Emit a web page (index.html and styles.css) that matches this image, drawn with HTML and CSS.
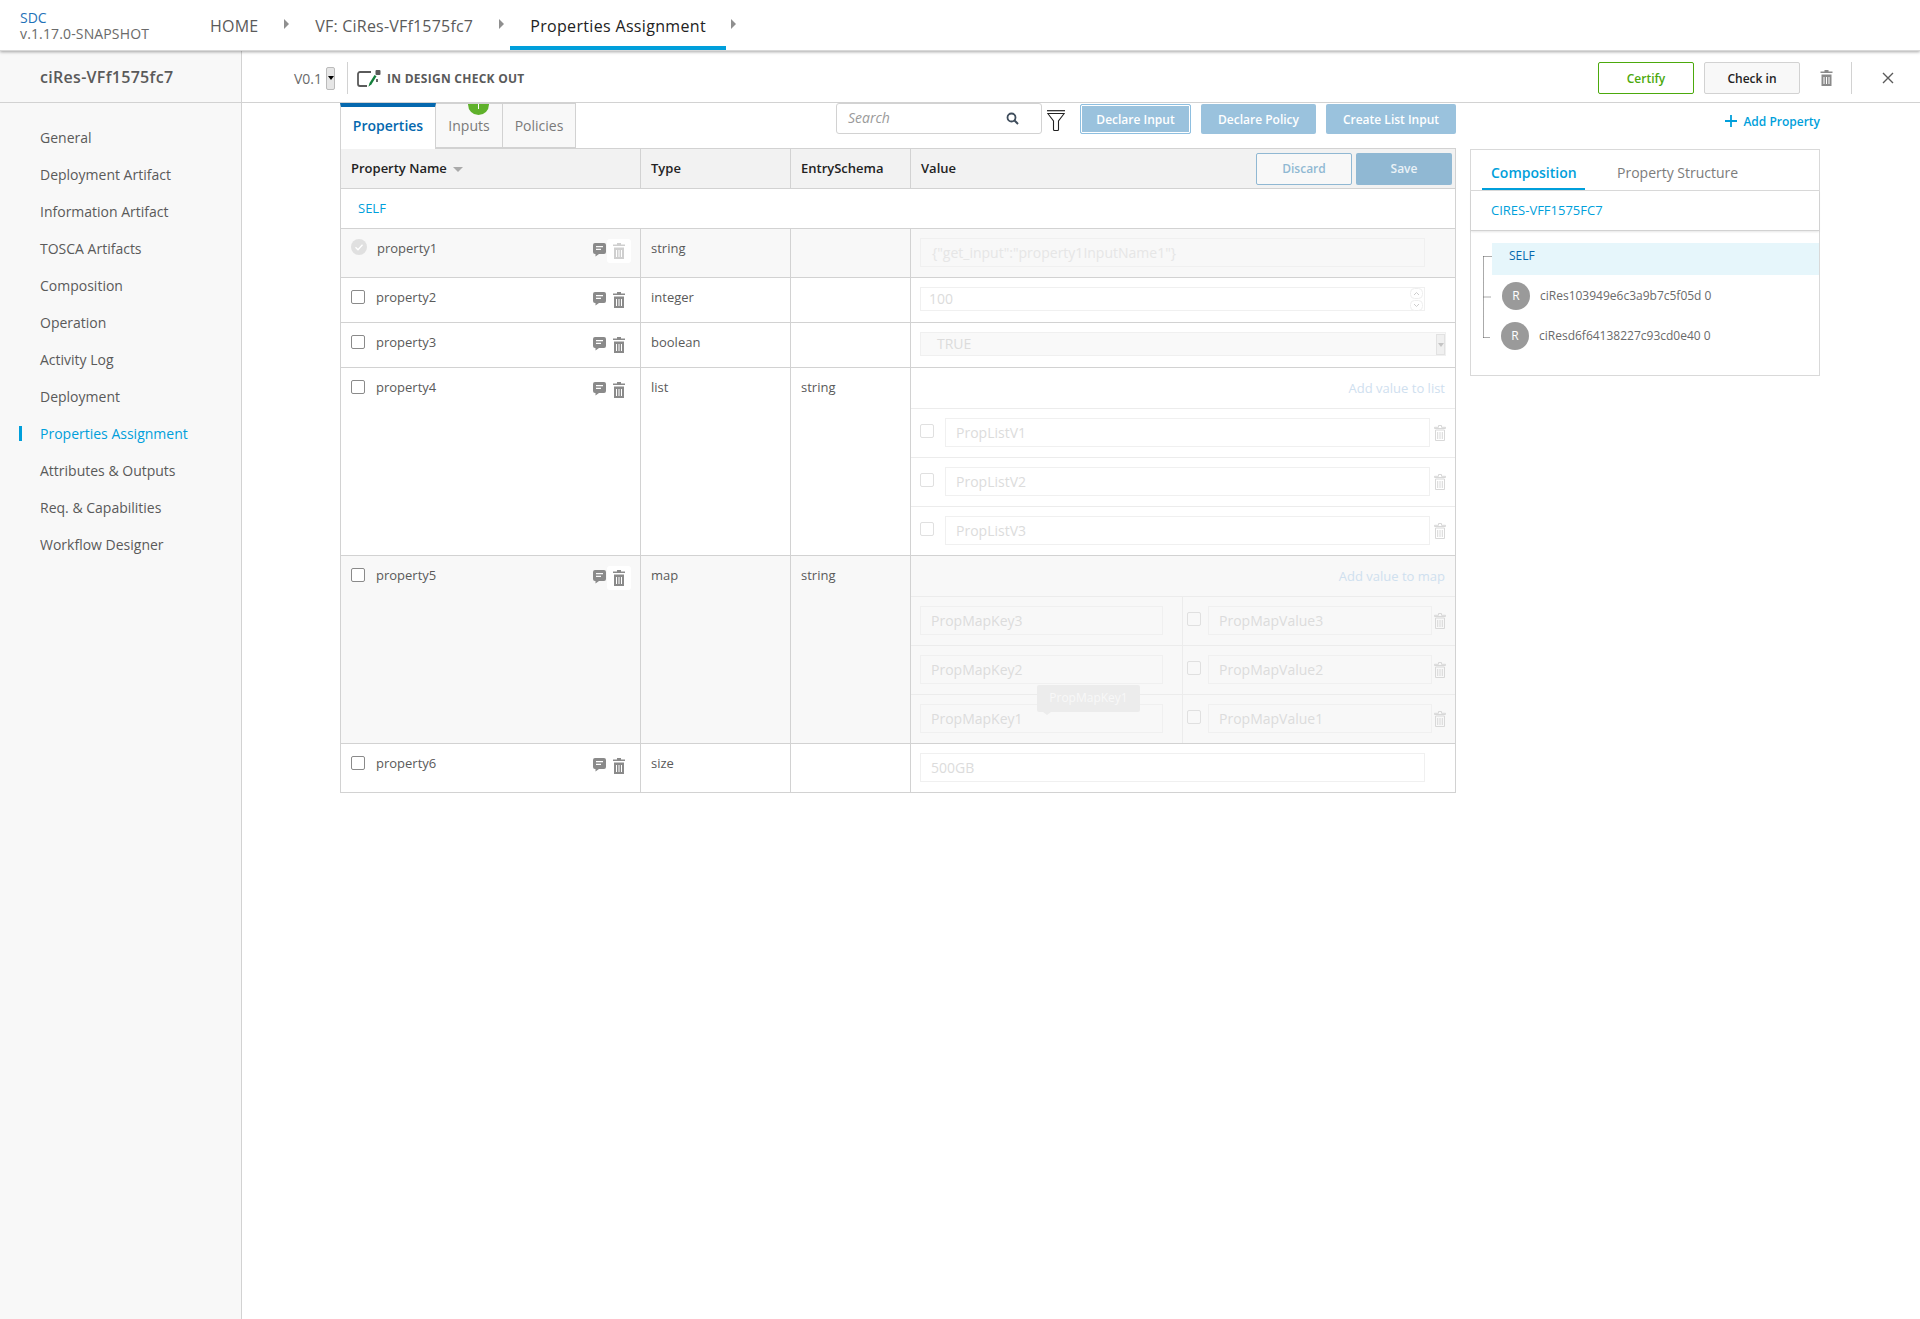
FILE: index.html
```html
<!DOCTYPE html>
<html lang="en">
<head>
<meta charset="utf-8">
<title>Properties Assignment</title>
<link rel="stylesheet" href="styles.css">
</head>
<body>
<svg class="sprite" xmlns="http://www.w3.org/2000/svg">
  <symbol id="trash" viewBox="0 0 12 16"><path d="M4 0h4v1.500h4V3H0V1.500h4zM1 4.500h10V16H1zM3 7v7h1V7zM5.500 7v7h1V7zM8 7v7h1V7z" fill-rule="evenodd"/></symbol>
  <symbol id="trash-line" viewBox="0 0 12 16"><path d="M4.500.5h3v1.800h4v1.200H.5V2.300h4zM1.500 5h9v10.500h-9zM3.700 7v7M6 7v7M8.300 7v7" fill="none" stroke="currentColor" stroke-width="1"/></symbol>
  <symbol id="comment" viewBox="0 0 13 14"><path d="M2 0h9a2 2 0 0 1 2 2v7a2 2 0 0 1-2 2H6l-3.500 2.500V11H2a2 2 0 0 1-2-2V2a2 2 0 0 1 2-2zM3 3v1.300h7V3zM3 5.800v1.200h5V5.800z" fill-rule="evenodd"/></symbol>
</svg>

<header class="app-header">
  <div class="logo"><div class="logo-name">SDC</div><div class="logo-version">v.1.17.0-SNAPSHOT</div></div>
  <nav class="crumbs">
    <a class="crumb">HOME</a><span class="crumb-arrow"></span>
    <a class="crumb">VF: CiRes-VFf1575fc7</a><span class="crumb-arrow"></span>
    <a class="crumb crumb-active">Properties Assignment</a><span class="crumb-arrow"></span>
  </nav>
</header>

<div class="app-body">
  <aside class="sidebar">
    <div class="side-title">ciRes-VFf1575fc7</div>
    <ul class="side-menu">
      <li>General</li>
      <li>Deployment Artifact</li>
      <li>Information Artifact</li>
      <li>TOSCA Artifacts</li>
      <li>Composition</li>
      <li>Operation</li>
      <li>Activity Log</li>
      <li>Deployment</li>
      <li class="side-active">Properties Assignment</li>
      <li>Attributes &amp; Outputs</li>
      <li>Req. &amp; Capabilities</li>
      <li>Workflow Designer</li>
    </ul>
  </aside>

  <main class="content">
    <div class="topbar">
      <span class="version">V0.1</span>
      <span class="version-select"></span>
      <span class="vsep"></span>
      <svg class="status-icon" viewBox="0 0 24 17" aria-hidden="true">
        <path d="M14 2H3a2 2 0 0 0-2 2v10a2 2 0 0 0 2 2h7M20 9v3" fill="none" stroke="#5a5a5a" stroke-width="1.800"/>
        <rect x="18.500" y="0" width="5" height="5" rx="1" fill="#5a5a5a"/>
        <path d="M11.500 16.800l1-3.800 5-8 2 1.200-5 8z" fill="#14803c"/>
      </svg>
      <span class="status-text">IN DESIGN CHECK OUT</span>
      <div class="top-actions">
        <button class="btn-certify">Certify</button>
        <button class="btn-checkin">Check in</button>
        <svg class="top-trash"><use href="#trash"/></svg>
        <span class="vsep vsep-right"></span>
        <svg class="top-close" viewBox="0 0 12 12" aria-hidden="true"><path d="M1 1l10 10M11 1L1 11" stroke="#5a5a5a" stroke-width="1.400"/></svg>
      </div>
    </div>

    <div class="workspace">
      <section class="left">
        <div class="toolbar">
          <div class="tabs">
            <div class="tab tab-active">Properties</div>
            <div class="tab tab-inputs">Inputs<span class="badge" aria-hidden="true"></span></div>
            <div class="tab">Policies</div>
          </div>
          <div class="tools">
            <div class="search"><span class="search-ph">Search</span>
              <svg class="search-icon" viewBox="0 0 13 13" aria-hidden="true"><circle cx="5.500" cy="5.500" r="4" fill="none" stroke="#3f4d5c" stroke-width="1.800"/><path d="M8.500 8.500l3.500 3.500" stroke="#3f4d5c" stroke-width="2"/></svg>
            </div>
            <svg class="filter" viewBox="0 0 18 21" aria-hidden="true"><path d="M0 .7h18" stroke="#222" stroke-width="1.200"/><path d="M.8 3.500h16.400L11.500 11v8.500a1 1 0 0 1-1 1h-3a1 1 0 0 1-1-1V11z" fill="#fff" stroke="#222" stroke-width="1.100"/></svg>
            <button class="btn-blue btn-focus btn-declare">Declare Input</button>
            <button class="btn-blue btn-policy">Declare Policy</button>
            <button class="btn-blue btn-list">Create List Input</button>
          </div>
        </div>

        <div class="table">
          <div class="row row-head">
            <div class="cell">Property Name <span class="sort"></span></div>
            <div class="cell">Type</div>
            <div class="cell">EntrySchema</div>
            <div class="cell cell-value-head">Value
              <div class="head-actions"><button class="btn-discard">Discard</button><button class="btn-save">Save</button></div>
            </div>
          </div>
          <div class="row-self">SELF</div>

          <div class="row row-m row-grey">
            <div class="cell cell-name">
              <svg class="check-done" viewBox="0 0 16 16" aria-hidden="true"><circle cx="8" cy="8" r="8" fill="#e0e0e0"/><path d="M4.500 8.200l2.500 2.500 4.500-5" fill="none" stroke="#fff" stroke-width="1.300"/></svg>
              <span class="pname pname-done">property1</span>
              <svg class="ico-comment"><use href="#comment"/></svg>
              <span class="trash-wrap trash-hover"><svg class="ico-trash ico-trash-off"><use href="#trash"/></svg></span>
            </div>
            <div class="cell">string</div>
            <div class="cell"></div>
            <div class="cell cell-val"><div class="field field-full field-grey field-faint">{"get_input":"property1InputName1"}</div></div>
          </div>

          <div class="row row-s">
            <div class="cell cell-name"><span class="box"></span><span class="pname">property2</span><svg class="ico-comment"><use href="#comment"/></svg><span class="trash-wrap"><svg class="ico-trash"><use href="#trash"/></svg></span></div>
            <div class="cell">integer</div>
            <div class="cell"></div>
            <div class="cell cell-val"><div class="field field-full field-short">100<span class="spin"><svg class="spin-btn" viewBox="0 0 13 11" aria-hidden="true"><rect x=".5" y=".5" width="12" height="10" rx="4" fill="#fff" stroke="#eee"/><path d="M4 7l2.500-2.500L9 7" fill="none" stroke="#ccc"/></svg><svg class="spin-btn" viewBox="0 0 13 11" aria-hidden="true"><rect x=".5" y=".5" width="12" height="10" rx="4" fill="#fff" stroke="#eee"/><path d="M4 4l2.500 2.500L9 4" fill="none" stroke="#ccc"/></svg></span></div></div>
          </div>

          <div class="row row-s">
            <div class="cell cell-name"><span class="box"></span><span class="pname">property3</span><svg class="ico-comment"><use href="#comment"/></svg><span class="trash-wrap"><svg class="ico-trash"><use href="#trash"/></svg></span></div>
            <div class="cell">boolean</div>
            <div class="cell"></div>
            <div class="cell cell-val"><div class="field field-short field-grey field-select">TRUE<span class="select-btn"></span></div></div>
          </div>

          <div class="row row-l">
            <div class="cell cell-name"><span class="box"></span><span class="pname">property4</span><svg class="ico-comment"><use href="#comment"/></svg><span class="trash-wrap"><svg class="ico-trash"><use href="#trash"/></svg></span></div>
            <div class="cell">list</div>
            <div class="cell">string</div>
            <div class="cell cell-complex">
              <div class="add-link">Add value to list</div>
              <div class="sub-row"><span class="box box-dim"></span><div class="field field-list">PropListV1</div><svg class="ico-trash-line"><use href="#trash-line"/></svg></div>
              <div class="sub-row"><span class="box box-dim"></span><div class="field field-list">PropListV2</div><svg class="ico-trash-line"><use href="#trash-line"/></svg></div>
              <div class="sub-row sub-last"><span class="box box-dim"></span><div class="field field-list">PropListV3</div><svg class="ico-trash-line"><use href="#trash-line"/></svg></div>
            </div>
          </div>

          <div class="row row-l row-grey">
            <div class="cell cell-name"><span class="box"></span><span class="pname">property5</span><svg class="ico-comment"><use href="#comment"/></svg><span class="trash-wrap trash-hover"><svg class="ico-trash"><use href="#trash"/></svg></span></div>
            <div class="cell">map</div>
            <div class="cell">string</div>
            <div class="cell cell-complex">
              <div class="add-link">Add value to map</div>
              <div class="sub-row sub-map"><div class="map-key"><div class="field field-key">PropMapKey3</div></div><span class="box box-dim"></span><div class="field field-mapval">PropMapValue3</div><svg class="ico-trash-line"><use href="#trash-line"/></svg></div>
              <div class="sub-row sub-map"><div class="map-key"><div class="field field-key">PropMapKey2</div></div><span class="box box-dim"></span><div class="field field-mapval">PropMapValue2</div><svg class="ico-trash-line"><use href="#trash-line"/></svg></div>
              <div class="sub-row sub-map sub-last"><div class="map-key"><div class="field field-key">PropMapKey1</div><div class="tip">PropMapKey1</div></div><span class="box box-dim"></span><div class="field field-mapval">PropMapValue1</div><svg class="ico-trash-line"><use href="#trash-line"/></svg></div>
            </div>
          </div>

          <div class="row row-m">
            <div class="cell cell-name"><span class="box"></span><span class="pname">property6</span><svg class="ico-comment"><use href="#comment"/></svg><span class="trash-wrap"><svg class="ico-trash"><use href="#trash"/></svg></span></div>
            <div class="cell">size</div>
            <div class="cell"></div>
            <div class="cell cell-val"><div class="field field-full">500GB</div></div>
          </div>
        </div>
      </section>

      <section class="right">
        <div class="add-prop"><svg class="plus" viewBox="0 0 12 12" aria-hidden="true"><path d="M6 0v12M0 6h12" stroke="#009fdb" stroke-width="1.800"/></svg>Add Property</div>
        <div class="panel">
          <div class="panel-tabs">
            <div class="ptab ptab-active">Composition</div>
            <div class="ptab">Property Structure</div>
          </div>
          <div class="panel-title">CIRES-VFF1575FC7</div>
          <div class="tree">
            <svg class="tree-lines" viewBox="0 0 10 84" aria-hidden="true"><path d="M.5 1.500V82.500M.5 1.500H9M.5 42H8M.5 82.500H7" fill="none" stroke="#555" stroke-width="1" stroke-dasharray="1 1"/></svg>
            <div class="tree-self">SELF</div>
            <div class="tree-item"><span class="avatar">R</span><span class="tree-label">ciRes103949e6c3a9b7c5f05d 0</span></div>
            <div class="tree-item tree-item-b"><span class="avatar">R</span><span class="tree-label">ciResd6f64138227c93cd0e40 0</span></div>
          </div>
        </div>
      </section>
    </div>
  </main>
</div>
</body>
</html>
```
FILE: styles.css
```css
* { box-sizing: border-box; }
html, body { margin: 0; height: 100%; }
body { font-family: "Open Sans", "Liberation Sans", sans-serif; font-size: 13px; color: #5a5a5a; background: #fff; overflow: hidden; }
.sprite { display: none; }
button { font-family: inherit; cursor: pointer; padding: 0; }

/* header */
.app-header { height: 51px; display: flex; background: #fff; box-shadow: 0 1px 3px rgba(0,0,0,.35); position: relative; z-index: 2; border-bottom: 1px solid #d8d8d8; }
.logo { width: 190px; padding: 10px 0 0 20px; font-size: 14px; line-height: 16px; }
.logo-name { color: #1f72b8; }
.logo-version { color: #6a6a6a; letter-spacing: .14px; }
.crumbs { display: flex; height: 50px; }
.crumb { padding: 0 20px; font-size: 16px; line-height: 52px; color: #5a5a5a; letter-spacing: .2px; }
.crumb-active { color: #222; border-bottom: 4px solid #009fdb; letter-spacing: .33px; }
.crumb-arrow { width: 17px; display: flex; justify-content: center; padding-top: 19px; }
.crumb-arrow:last-child { margin-left: -1px; }
.crumb-arrow::after { content: ""; display: block; width: 0; height: 0; border-left: 5px solid #8f8f8f; border-top: 5px solid transparent; border-bottom: 5px solid transparent; }

/* layout */
.app-body { display: flex; height: calc(100% - 51px); }
.sidebar { width: 242px; flex: none; background: #f8f8f8; border-right: 1px solid #d2d2d2; }
.side-title { height: 52px; border-bottom: 1px solid #d2d2d2; padding-left: 40px; font-size: 16px; font-weight: 600; line-height: 52px; color: #5a5a5a; letter-spacing: .3px; }
.side-menu { list-style: none; margin: 0; padding: 16px 0 0 40px; font-size: 14px; }
.side-menu li { height: 37px; line-height: 37px; position: relative; color: #5a5a5a; }
.side-menu .side-active { color: #009fdb; }
.side-active::before { content: ""; position: absolute; left: -21px; top: 11px; width: 3px; height: 15px; background: #009fdb; }
.content { flex: 1; min-width: 0; }

/* top bar */
.topbar { height: 52px; border-bottom: 1px solid #d2d2d2; display: flex; align-items: center; padding: 3px 26px 0 52px; }
.version { font-size: 14px; color: #6a6a6a; width: 32px; }
.version-select { width: 9px; height: 23px; background: #e6e6e6; border: 1px solid #bbb; border-radius: 2px; position: relative; }
.version-select::after { content: ""; position: absolute; left: 1px; top: 8px; border-top: 4px solid #000; border-left: 3px solid transparent; border-right: 3px solid transparent; }
.vsep { width: 1px; height: 32px; background: #d2d2d2; margin: 0 9px 0 12px; }
.status-icon { width: 24px; height: 17px; }
.status-text { margin-left: 6px; font-size: 12px; font-weight: 700; color: #5a5a5a; letter-spacing: .27px; }
.top-actions { margin-left: auto; display: flex; align-items: center; }
.btn-certify, .btn-checkin { width: 96px; height: 32px; border-radius: 2px; font-size: 12px; font-weight: 600; }
.btn-certify { background: #fff; border: 1px solid #4ca90c; color: #4ca90c; margin-right: 10px; }
.btn-checkin { background: #f8f8f8; border: 1px solid #d2d2d2; color: #222; }
.top-trash { width: 13px; height: 16px; fill: #8a8a8a; margin-left: 20px; }
.vsep-right { margin: 0 30px 0 18px; }
.top-close { width: 12px; height: 12px; }

/* workspace */
.workspace { display: flex; padding-left: 98px; }
.left { width: 1116px; flex: none; }
.right { width: 350px; margin-left: 14px; }

/* toolbar */
.toolbar { height: 45px; display: flex; align-items: flex-start; }
.tabs { display: flex; height: 46px; position: relative; z-index: 1; }
.tab { width: 73px; height: 45px; background: #f8f8f8; border: 1px solid #d2d2d2; border-left: 0; font-size: 14px; line-height: 44px; text-align: center; position: relative; overflow: hidden; color: #7a7a7a; }
.tab-inputs { width: 67px; }
.tab-active { width: 96px; height: 46px; background: #fff; border: 0; border-left: 1px solid #d2d2d2; border-right: 1px solid #d2d2d2; border-top: 4px solid #0568ae; font-weight: 600; color: #0568ae; line-height: 38px; }
.badge { position: absolute; left: 32px; top: -10px; width: 21px; height: 21px; border-radius: 50%; background: #5fb12b; }
.badge::after { content: ""; position: absolute; left: 10px; top: 10px; width: 1px; height: 5px; background: #fff; }
.tools { margin-left: auto; display: flex; align-items: flex-start; }
.search { width: 206px; height: 31px; border: 1px solid #d2d2d2; border-radius: 3px; padding: 0 10px 2px 11px; display: flex; align-items: center; justify-content: space-between; }
.search-ph { font-size: 14px; font-style: italic; color: #9a9a9a; }
.search-icon { width: 13px; height: 13px; margin: 1px 12px 0 0; }
.filter { width: 18px; height: 21px; margin: 7px 15px 0 5px; }
.btn-blue { height: 30px; margin-top: 1px; border: 0; border-radius: 2px; background: #9ac2dd; color: #fff; font-size: 12px; font-weight: 600; }
.btn-focus { border: 1px solid #8ebfe0; box-shadow: inset 0 0 0 1px #fff; }
.btn-declare { width: 111px; margin-right: 10px; }
.btn-policy { width: 115px; margin-right: 10px; }
.btn-list { width: 130px; }

/* table */
.table { border: 1px solid #d2d2d2; border-bottom: 0; }
.row { display: grid; grid-template-columns: 300px 150px 120px minmax(0, 1fr); border-bottom: 1px solid #d2d2d2; }
.row-head { height: 40px; background: #f2f2f2; font-weight: 600; color: #222; }
.row-m { height: 49px; }
.row-s { height: 45px; }
.row-l { height: 188px; }
.row-grey { background: #f8f8f8; }
.row-self { height: 40px; border-bottom: 1px solid #d2d2d2; padding-left: 17px; line-height: 39px; font-size: 13px; color: #009fdb; }
.cell { border-right: 1px solid #d2d2d2; padding: 9px 10px 0; line-height: 20px; }
.cell:last-child { border-right: 0; }
.row-head .cell { padding-top: 0; line-height: 39px; display: flex; align-items: center; }
.sort { display: inline-block; margin-left: 6px; margin-top: 2px; border-top: 5px solid #aaa; border-left: 5px solid transparent; border-right: 5px solid transparent; }
.cell-value-head { padding-right: 3px; justify-content: space-between; }
.head-actions { display: flex; gap: 4px; }
.btn-discard, .btn-save { width: 96px; height: 32px; border-radius: 2px; font-size: 12px; font-weight: 600; }
.btn-discard { background: #f8f8f8; border: 1px solid #90b8d3; color: #90b8d3; }
.btn-save { background: #90b8d3; border: 0; color: #eaf2f7; }

.cell-name { display: flex; align-items: flex-start; padding: 9px 9px 0 10px; }
.box { width: 14px; height: 14px; flex: none; border: 1px solid #8a8a8a; border-radius: 2px; margin-top: 3px; background: #fff; }
.pname { margin-left: 11px; }
.pname-done { margin-left: 10px; }
.check-done { width: 16px; height: 16px; flex: none; margin-top: 1px; }
.ico-comment { width: 13px; height: 14px; fill: #8a8a8a; margin-left: auto; margin-top: 5px; flex: none; }
.trash-wrap { width: 24px; height: 24px; flex: none; margin: 1px 0 0 1px; display: flex; align-items: center; justify-content: center; border-radius: 3px; }
.trash-hover { background: #fff; }
.ico-trash { width: 12px; height: 16px; fill: #8a8a8a; }
.ico-trash-off { fill: #cfcfcf; }

/* value column */
.cell-val { padding: 9px 9px 0; }
.field { height: 29px; border: 1px solid #f0f0f0; background: #fff; padding-left: 10px; font-size: 14px; line-height: 27px; color: #dcdcdc; white-space: nowrap; flex: none; }
.field-full { width: 505px; }
.field-grey { background: #f8f8f8; }
.field-faint { color: #e6e6e6; padding-left: 11px; }
.field-short { height: 24px; line-height: 22px; padding-left: 8px; position: relative; }
.field-select { width: 526px; background: #f9f9f9; padding-left: 16px; }
.select-btn { position: absolute; right: 0; top: 1px; width: 9px; height: 21px; background: #f0f0f0; border: 1px solid #e2e2e2; }
.select-btn::after { content: ""; position: absolute; left: 1px; top: 8px; border-top: 4px solid #c4c4c4; border-left: 3px solid transparent; border-right: 3px solid transparent; }
.spin { position: absolute; right: 1px; top: 0; width: 13px; display: flex; flex-direction: column; gap: 1px; }
.spin-btn { display: block; width: 13px; height: 11px; }
.cell-complex { padding: 0; }
.add-link { height: 41px; border-bottom: 1px solid #ececec; padding-right: 10px; text-align: right; line-height: 40px; font-size: 13px; color: #cfe0ef; }
.sub-row { height: 49px; border-bottom: 1px solid #ececec; display: flex; align-items: flex-start; padding: 9px 9px 0; }
.sub-last { height: 48px; border-bottom: 0; }
.box-dim { border-color: #e0e0e0; margin-top: 6px; background: transparent; }
.field-list { width: 485px; margin-left: 11px; padding-left: 10px; }
.ico-trash-line { width: 12px; height: 16px; margin: 7px 0 0 4px; color: #d8d8d8; flex: none; }
.row-grey .field { background: #f8f8f8; }
.sub-map { padding: 0 9px 0 0; }
.map-key { width: 272px; height: 100%; padding: 9px 0 0 9px; border-right: 1px solid #ececec; position: relative; margin-right: 4px; flex: none; }
.field-key { width: 243px; padding-left: 10px; }
.sub-map .box-dim { margin-top: 15px; }
.field-mapval { width: 224px; margin: 9px 0 0 7px; padding-left: 10px; }
.sub-map .ico-trash-line { margin-top: 16px; margin-left: 2px; }
.tip { position: absolute; left: 126px; top: -10px; width: 103px; height: 27px; background: #ececec; border-radius: 2px; color: #f8f8f8; font-size: 12px; line-height: 26px; text-align: center; }
.tip::after { content: ""; position: absolute; left: 6px; bottom: -3px; border-top: 3px solid #ececec; border-left: 4px solid transparent; border-right: 4px solid transparent; }

/* right panel */
.add-prop { height: 46px; display: flex; justify-content: flex-end; align-items: center; padding-bottom: 10px; font-size: 12px; font-weight: 600; color: #009fdb; }
.plus { width: 12px; height: 12px; margin-right: 6px; }
.panel { height: 227px; border: 1px solid #d9d9d9; }
.panel-tabs { height: 41px; display: flex; border-bottom: 1px solid #d9d9d9; padding-left: 11px; }
.ptab { font-size: 14px; line-height: 46px; color: #7c7c7c; padding: 0 9px; }
.ptab-active { width: 103px; height: 40px; border-bottom: 2px solid #009fdb; font-weight: 600; color: #009fdb; margin-right: 23px; }
.panel-title { height: 40px; border-bottom: 1px solid #d2d2d2; box-shadow: 0 1px 2px rgba(0,0,0,.1); padding-left: 20px; line-height: 38px; font-size: 13px; color: #009fdb; }
.tree { padding: 12px 0 0 21px; position: relative; }
.tree-lines { position: absolute; left: 12px; top: 24px; width: 10px; height: 84px; }
.tree-self { height: 32px; background: #e6f6fb; padding-left: 17px; line-height: 26px; font-size: 12px; color: #0568ae; margin-bottom: 1px; }
.tree-item { height: 40px; display: flex; align-items: center; padding-left: 10px; font-size: 12px; color: #6a6a6a; }
.tree-item-b { padding-left: 9px; }
.tree-label { margin-top: -2px; }
.avatar { width: 28px; height: 28px; border-radius: 50%; background: #9a9a9a; color: #fff; text-align: center; line-height: 28px; font-size: 12px; margin-right: 10px; }
```
